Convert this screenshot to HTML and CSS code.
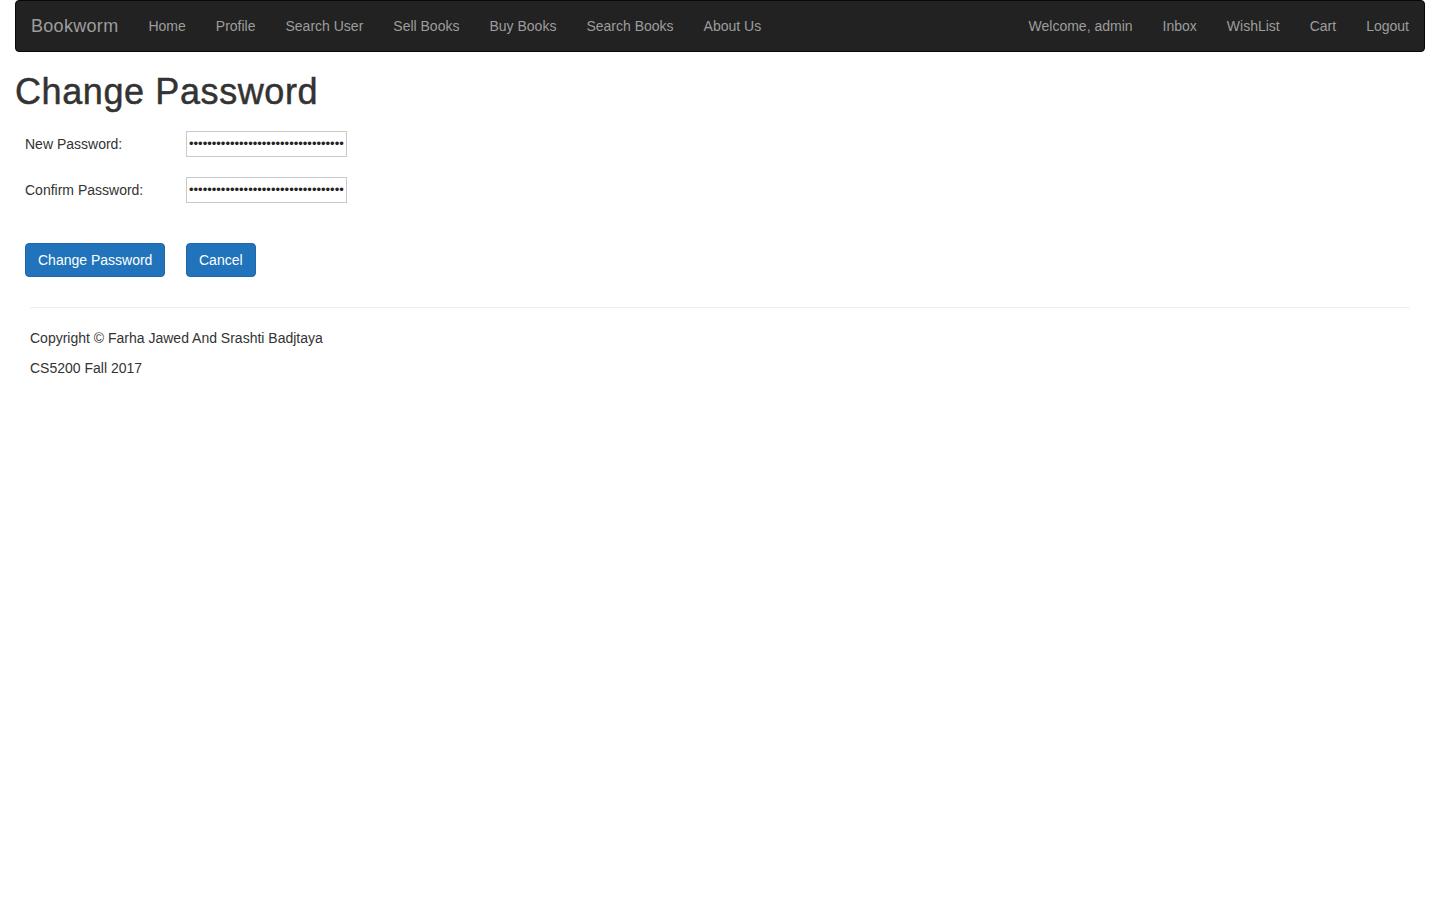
FILE: index.html
```html
<!DOCTYPE html>
<html>
<head>
<meta charset="utf-8">
<title>Change Password</title>
<link rel="stylesheet" href="styles.css">
</head>
<body>
<div class="page">
  <nav class="navbar">
    <a class="brand" href="#">Bookworm</a>
    <ul class="nav">
      <li><a href="#">Home</a></li>
      <li><a href="#">Profile</a></li>
      <li><a href="#">Search User</a></li>
      <li><a href="#">Sell Books</a></li>
      <li><a href="#">Buy Books</a></li>
      <li><a href="#">Search Books</a></li>
      <li><a href="#">About Us</a></li>
    </ul>
    <ul class="nav nav-right">
      <li><a href="#">Welcome, admin</a></li>
      <li><a href="#">Inbox</a></li>
      <li><a href="#">WishList</a></li>
      <li><a href="#">Cart</a></li>
      <li><a href="#">Logout</a></li>
    </ul>
  </nav>

  <h1 class="title">Change Password</h1>

  <form class="pw-form">
    <table class="pw-table">
      <tr>
        <td class="label-cell">New Password:</td>
        <td><input class="pw-input" type="password" value="abcdefghijklmnopqrstuvwxyzabcdefgh"></td>
      </tr>
      <tr>
        <td class="label-cell">Confirm Password:</td>
        <td><input class="pw-input" type="password" value="abcdefghijklmnopqrstuvwxyzabcdefgh"></td>
      </tr>
      <tr class="btn-row">
        <td><button type="button" class="btn">Change Password</button></td>
        <td><button type="button" class="btn">Cancel</button></td>
      </tr>
    </table>
  </form>

  <footer class="footer">
    <hr class="rule">
    <p>Copyright &copy; Farha Jawed And Srashti Badjtaya</p>
    <p>CS5200 Fall 2017</p>
  </footer>
</div>
</body>
</html>
```

FILE: styles.css
```css
html, body {
  margin: 0;
  padding: 0;
  background: #fff;
}

body {
  font-family: "Liberation Sans", Arial, Helvetica, sans-serif;
  font-size: 14px;
  line-height: 20px;
  color: #333;
}

.page {
  padding: 0 15px;
}

.navbar {
  display: flex;
  align-items: stretch;
  height: 50px;
  background: #222;
  border: 1px solid #080808;
  border-radius: 4px;
  margin-bottom: 20px;
}

.brand {
  display: block;
  padding: 15px;
  font-size: 18px;
  line-height: 20px;
  letter-spacing: 0.3px;
  color: #9d9d9d;
  text-decoration: none;
}

.nav {
  display: flex;
  list-style: none;
  margin: 0;
  padding: 0;
}

.nav a {
  display: block;
  padding: 15px;
  line-height: 20px;
  color: #9d9d9d;
  text-decoration: none;
}

.nav-right {
  margin-left: auto;
}

.title {
  font-size: 36px;
  font-weight: 500;
  line-height: 1.1;
  letter-spacing: 0.6px;
  -webkit-text-stroke: 0.5px #333;
  margin: 20px 0 9px;
  color: #333;
}

.pw-form {
  margin: 0;
}

.pw-table {
  border-collapse: collapse;
}

.pw-table td {
  padding: 10px;
  vertical-align: middle;
}

.label-cell {
  width: 141px;
}

.pw-input {
  display: block;
  box-sizing: border-box;
  width: 161px;
  height: 26px;
  margin: 0;
  padding: 1px 2px;
  border: 1px solid #c9c9c9;
  font-family: "Liberation Sans", Arial, sans-serif;
  font-size: 13px;
  color: #222;
  background: #fff;
}

.btn-row td {
  padding-top: 30px;
}

.btn {
  display: inline-block;
  padding: 6px 12px;
  font-family: "Liberation Sans", Arial, sans-serif;
  font-size: 14px;
  line-height: 20px;
  color: #fff;
  background: #2174bb;
  border: 1px solid #1e68a8;
  border-radius: 4px;
  cursor: pointer;
}

.footer {
  padding: 0 15px;
}

.rule {
  margin: 20px 0;
  border: 0;
  border-top: 1px solid #eee;
}

.footer p {
  margin: 0 0 10px;
}
```
